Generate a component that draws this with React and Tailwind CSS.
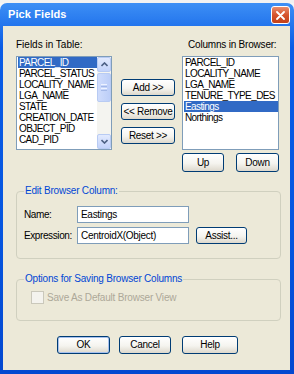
const font = { fontFamily: '"Liberation Sans", Arial, sans-serif' }

const leftFields = [
  'PARCEL_ID',
  'PARCEL_STATUS',
  'LOCALITY_NAME',
  'LGA_NAME',
  'STATE',
  'CREATION_DATE',
  'OBJECT_PID',
  'CAD_PID',
]

const rightFields = ['PARCEL_ID', 'LOCALITY_NAME', 'LGA_NAME', 'TENURE_TYPE_DES', 'Eastings', 'Northings']

function XpButton({ children, className = '', isDefault = false }) {
  return (
    <div
      className={`h-[17px] rounded-[3px] border border-[#003C74] bg-[linear-gradient(180deg,#FFFFFF_0%,#F5F4EF_55%,#DDD8CC_100%)] text-[10px] tracking-[-0.3px] leading-none text-black whitespace-nowrap flex items-center justify-center ${
        isDefault ? 'shadow-[inset_0_0_0_1px_#A7C1EE]' : ''
      } ${className}`}
    >
      {children}
    </div>
  )
}

function ScrollArrow({ down = false }) {
  return (
    <div className="h-[15px] rounded-[2px] border border-[#B8CBF3] bg-[linear-gradient(180deg,#E2EAFE_0%,#C3D3FB_100%)] flex items-center justify-center">
      <svg width="7" height="5" viewBox="0 0 7 5">
        <path
          d={down ? 'M0.5 1 L3.5 4 L6.5 1' : 'M0.5 4 L3.5 1 L6.5 4'}
          fill="none"
          stroke="#4D6185"
          strokeWidth="1.6"
        />
      </svg>
    </div>
  )
}

function ListBox({ items, selected, scroll = false }) {
  return (
    <div className="h-[94px] border border-[#7F9DB9] bg-white flex overflow-hidden">
      <div className="flex-1 min-w-0 pl-[1px]">
        {items.map((item) => (
          <div
            key={item}
            className={`h-[11px] leading-[11px] text-[10px] tracking-[-0.6px] pl-[1px] whitespace-nowrap ${
              item === selected ? 'bg-[#316AC5] text-white' : 'text-black'
            }`}
          >
            {item}
          </div>
        ))}
      </div>
      {scroll && (
        <div className="w-[14px] bg-[#F4F4F0] flex flex-col">
          <ScrollArrow />
          <div className="h-[29px] mt-[1px] rounded-[2px] border border-[#B8CBF3] bg-[linear-gradient(90deg,#CFDCFC_0%,#BCCEF8_100%)] flex flex-col items-center justify-center gap-[1px]">
            <div className="w-[6px] h-[1px] bg-[#EEF3FF]" />
            <div className="w-[6px] h-[1px] bg-[#A3B8E8]" />
            <div className="w-[6px] h-[1px] bg-[#EEF3FF]" />
            <div className="w-[6px] h-[1px] bg-[#A3B8E8]" />
          </div>
          <div className="flex-1" />
          <ScrollArrow down />
        </div>
      )}
    </div>
  )
}

export default function App() {
  return (
    <div className="w-[294px] h-[374px] bg-[#F6F6F6] flex flex-col overflow-hidden" style={font}>
      <div className="h-[3px] bg-[#F2F2F2]" />
      <div className="flex-1 flex flex-col rounded-t-[7px] bg-[linear-gradient(180deg,#3D8FF5_0%,#0A5CE5_12%,#0656E0_60%,#0348D0_100%)] pl-[3px] pr-[4px] pb-[4px]">
        {/* Title bar */}
        <div className="h-[23px] flex items-center justify-between">
          <span className="pl-[5px] text-[11px] font-bold text-white tracking-[0.1px]">Pick Fields</span>
          <div className="w-[19px] h-[18px] mt-[1px] rounded-[3px] border border-white bg-[linear-gradient(180deg,#E88C6C_0%,#D6532C_50%,#C2411A_100%)] flex items-center justify-center">
            <svg width="9" height="9" viewBox="0 0 9 9">
              <path d="M1 1 L8 8 M8 1 L1 8" stroke="white" strokeWidth="1.8" strokeLinecap="round" />
            </svg>
          </div>
        </div>

        {/* Body */}
        <div className="flex-1 bg-[#ECE9D8] text-black">
          <div className="flex pl-[13px] pt-[13px]">
            <div className="w-[96px]">
              <div className="h-[12px] leading-[12px] text-[10px]">Fields in Table:</div>
              <div className="mt-[5px]">
                <ListBox items={leftFields} selected="PARCEL_ID" scroll />
              </div>
            </div>
            <div className="w-[54px] ml-[9px] pt-[40px] flex flex-col gap-[7px]">
              <XpButton>Add &gt;&gt;</XpButton>
              <XpButton>&lt;&lt; Remove</XpButton>
              <XpButton>Reset &gt;&gt;</XpButton>
            </div>
            <div className="w-[97px] ml-[7px]">
              <div className="h-[12px] leading-[12px] text-[10px] tracking-[-0.2px] pl-[6px] whitespace-nowrap">Columns in Browser:</div>
              <div className="mt-[5px]">
                <ListBox items={rightFields} selected="Eastings" />
              </div>
              <div className="mt-[3px] flex justify-between">
                <XpButton className="w-[42px] h-[19px]">Up</XpButton>
                <XpButton className="w-[43px] h-[19px]">Down</XpButton>
              </div>
            </div>
          </div>

          {/* Edit Browser Column */}
          <fieldset className="ml-[13px] mt-[13px] w-[265px] border border-[#D0D0BF] rounded-[4px] pl-[7px] pt-[9px] pb-[14px]">
            <legend className="px-[1px] text-[10px] tracking-[-0.2px] leading-[12px] text-[#0046D5]">Edit Browser Column:</legend>
            <div className="flex items-center h-[17px]">
              <span className="w-[53px] text-[10px] tracking-[-0.4px]">Name:</span>
              <div className="w-[112px] h-[17px] border border-[#7F9DB9] bg-white px-[3px] text-[10px] tracking-[-0.3px] flex items-center">Eastings</div>
            </div>
            <div className="flex items-center h-[17px] mt-[4px]">
              <span className="w-[53px] text-[10px] tracking-[-0.4px]">Expression:</span>
              <div className="w-[112px] h-[17px] border border-[#7F9DB9] bg-white px-[3px] text-[10px] tracking-[-0.3px] flex items-center">CentroidX(Object)</div>
              <XpButton className="w-[51px] ml-[7px]">Assist...</XpButton>
            </div>
          </fieldset>

          {/* Options for Saving */}
          <fieldset className="ml-[13px] mt-[14px] w-[265px] border border-[#D0D0BF] rounded-[4px] pl-[14px] pt-[6px] pb-[16px]">
            <legend className="ml-[-7px] px-[1px] text-[10px] tracking-[-0.2px] leading-[12px] text-[#0046D5]">Options for Saving Browser Columns</legend>
            <div className="flex items-center h-[13px]">
              <div className="w-[13px] h-[13px] border border-[#CAC8BB] bg-[#F4F3EE]" />
              <span className="ml-[3px] text-[10px] tracking-[-0.2px] text-[#ACA899]">Save As Default Browser View</span>
            </div>
          </fieldset>

          <div className="flex ml-[54px] mt-[15px]">
            <XpButton className="w-[53px] h-[18px]" isDefault>OK</XpButton>
            <XpButton className="w-[52px] h-[18px] ml-[9px]">Cancel</XpButton>
            <XpButton className="w-[56px] h-[18px] ml-[11px]">Help</XpButton>
          </div>
        </div>
      </div>
    </div>
  )
}
